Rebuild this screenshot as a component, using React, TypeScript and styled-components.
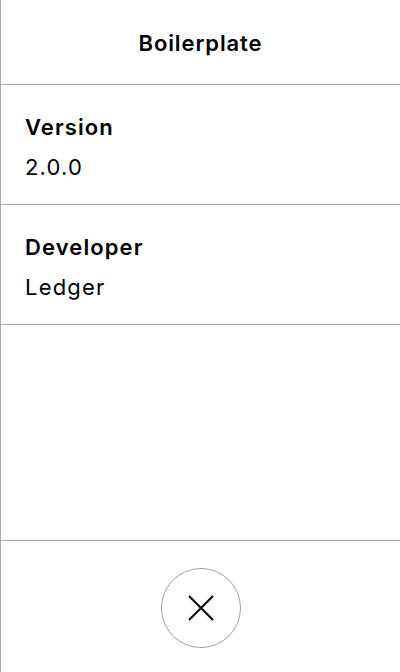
import React from "react";
import styled, { createGlobalStyle } from "styled-components";

const Global = createGlobalStyle`
  html, body { margin: 0; padding: 0; background: #fff; }
  body { font-family: Inter, "Noto Sans", sans-serif; color: #000; }
  * { box-sizing: border-box; }
`;

const Screen = styled.div`
  width: 400px;
  height: 672px;
  display: flex;
  flex-direction: column;
  border-left: 1px solid #a8a8a8;
  background: #fff;
`;

const Header = styled.div`
  height: 85px;
  display: flex;
  align-items: center;
  justify-content: center;
  border-bottom: 1px solid #a8a8a8;
  font-size: 22px;
  line-height: 28px;
  font-weight: 600;
  letter-spacing: 0.9px;
  padding-top: 2px;
`;

const Row = styled.div`
  height: 120px;
  display: flex;
  flex-direction: column;
  gap: 11px;
  padding: 28px 24px 0;
  border-bottom: 1px solid #a8a8a8;
`;

const Label = styled.div`
  font-size: 22px;
  font-weight: 600;
  line-height: 28px;
  letter-spacing: 1.1px;
`;

const Value = styled.div`
  font-size: 22px;
  font-weight: 400;
  line-height: 28px;
  letter-spacing: 1.2px;
  padding-top: 1px;
`;

const Spacer = styled.div`
  flex: 1;
  border-bottom: 1px solid #a8a8a8;
`;

const Footer = styled.div`
  height: 131px;
  display: flex;
  align-items: center;
  justify-content: center;
  padding-top: 3px;
`;

const CloseButton = styled.button`
  width: 80px;
  height: 80px;
  border-radius: 50%;
  border: 1px solid #a0a0a0;
  background: #fff;
  display: flex;
  align-items: center;
  justify-content: center;
  padding: 0;
  cursor: pointer;
`;

export default function App() {
  return (
    <>
      <Global />
      <Screen>
        <Header>Boilerplate</Header>
        <Row>
          <Label>Version</Label>
          <Value>2.0.0</Value>
        </Row>
        <Row>
          <Label>Developer</Label>
          <Value>Ledger</Value>
        </Row>
        <Spacer />
        <Footer>
          <CloseButton aria-label="Close">
            <svg width="26" height="26" viewBox="0 0 26 26">
              <path d="M1 1 L25 25 M25 1 L1 25" stroke="#000" strokeWidth="2" fill="none" />
            </svg>
          </CloseButton>
        </Footer>
      </Screen>
    </>
  );
}
